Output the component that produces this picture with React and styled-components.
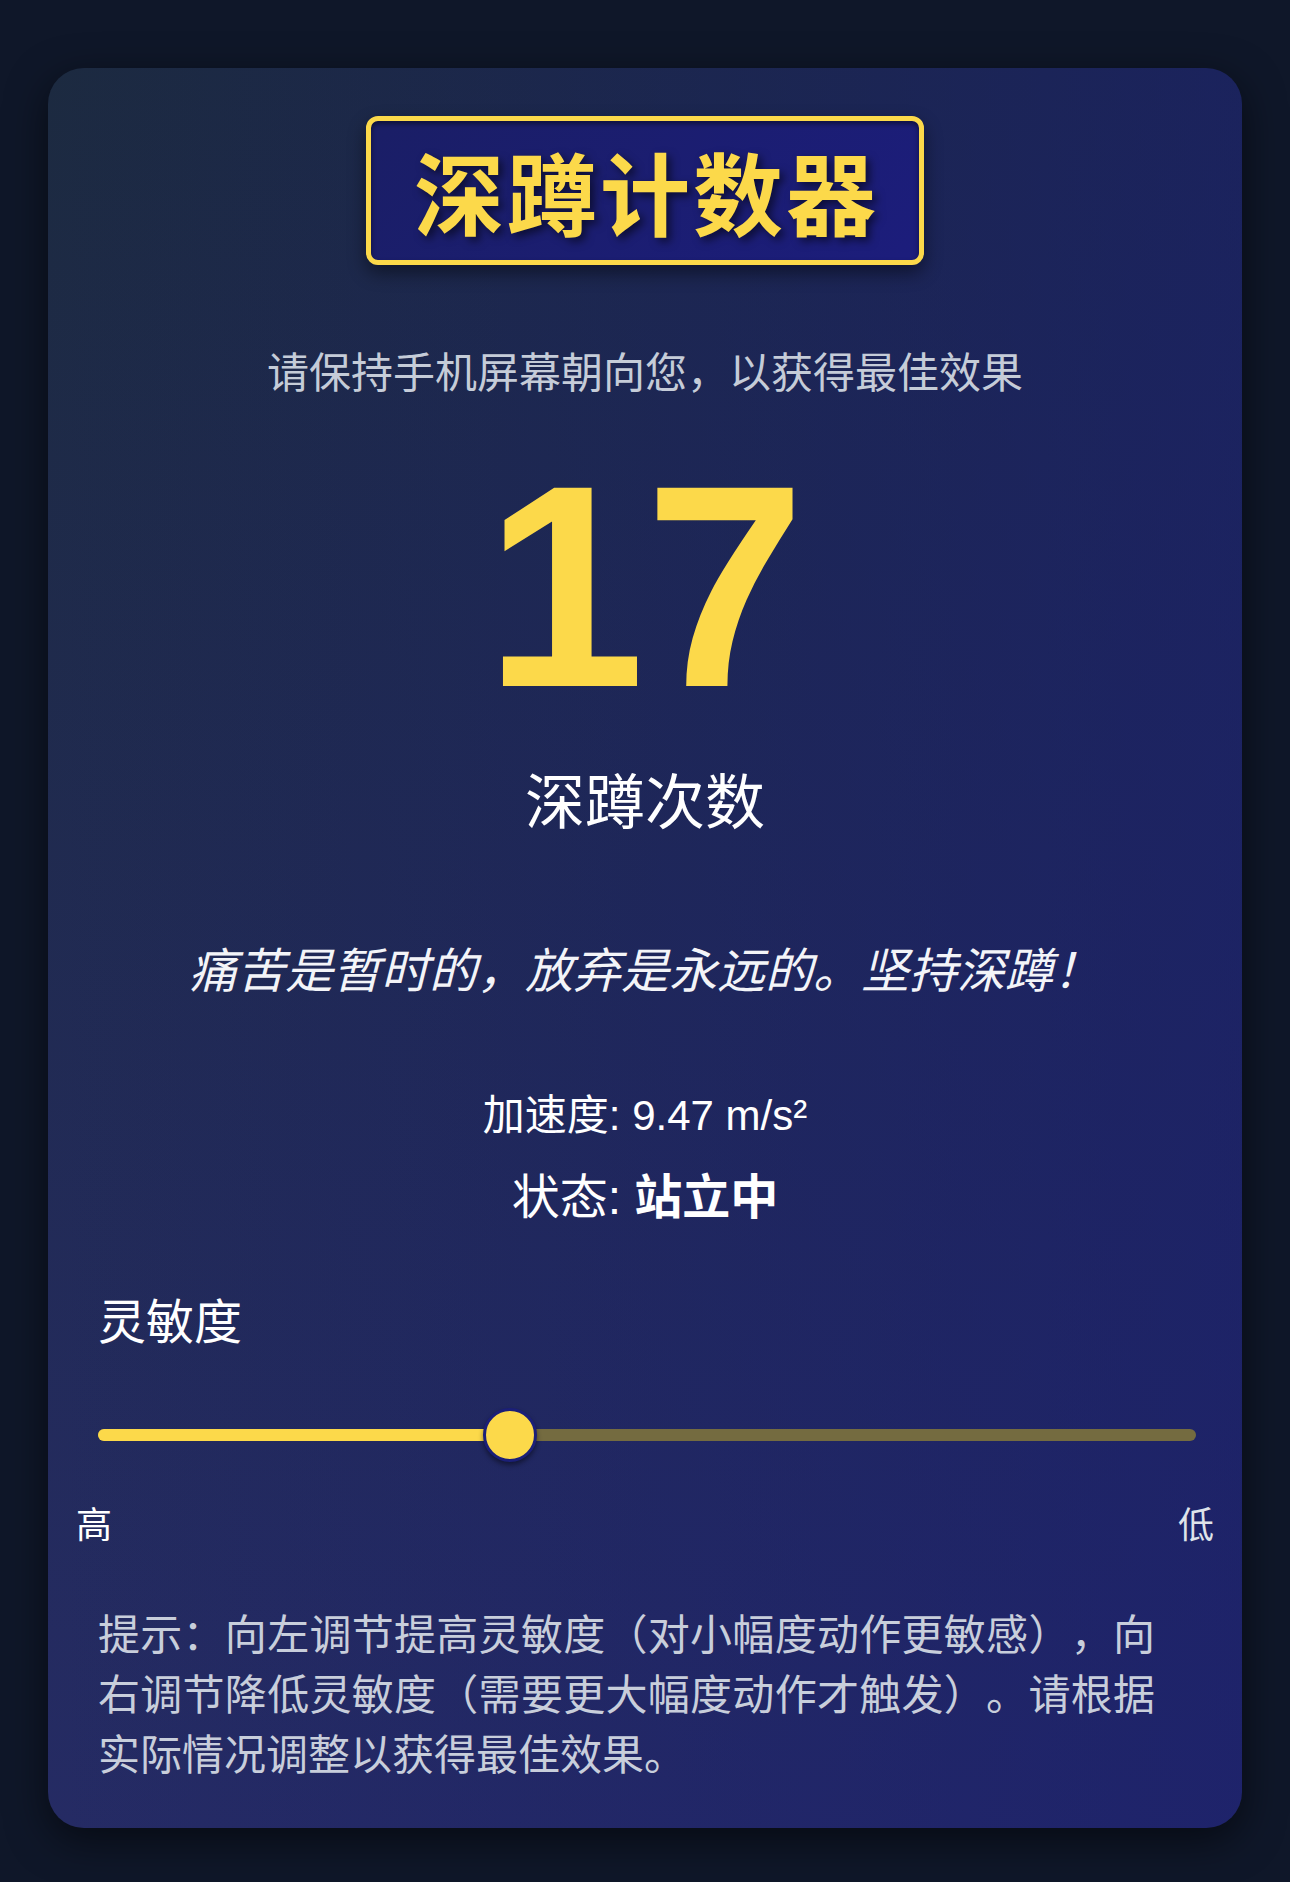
import React from "react";
import styled, { createGlobalStyle } from "styled-components";

const GlobalStyle = createGlobalStyle`
  html, body {
    margin: 0;
    padding: 0;
    background: #0f1729;
  }
  body {
    font-family: "Liberation Sans", "Noto Sans CJK SC", sans-serif;
    color: #ffffff;
  }
  * { box-sizing: border-box; }
`;

const Page = styled.div`
  min-height: 1882px;
  padding: 68px 48px 54px;
  background: #0f1729;
`;

const Card = styled.div`
  border-radius: 36px;
  padding: 48px 50px 46px;
  background:
    linear-gradient(to right, rgba(26, 30, 110, 0) 0%, rgba(26, 30, 112, 0.6) 100%),
    linear-gradient(to bottom, #1c2a40 0%, #252b64 100%);
  box-shadow: 0 12px 40px rgba(0, 0, 0, 0.55);
  display: flex;
  flex-direction: column;
  align-items: center;
`;

const TitleBox = styled.h1`
  margin: 0;
  height: 149px;
  padding: 0 40px 0 43px;
  border: 5px solid #fcd94a;
  border-radius: 12px;
  background: linear-gradient(135deg, #1a1e66 0%, #1c1d7c 100%);
  box-shadow: 0 8px 18px rgba(0, 0, 0, 0.45), inset 0 3px 5px rgba(0, 0, 0, 0.45);
  color: #fcd94a;
  font-family: "Noto Sans CJK SC", sans-serif;
  font-weight: 700;
  font-size: 90px;
  line-height: 139px;
  letter-spacing: 3px;
  text-shadow: 4px 4px 8px rgba(0, 0, 0, 0.55);
  white-space: nowrap;
`;

const Subtitle = styled.p`
  margin: 75px 0 0;
  font-family: "Noto Sans CJK SC", sans-serif;
  font-size: 42px;
  line-height: 60px;
  color: #c5ccd8;
`;

const Count = styled.div`
  margin-top: 42px;
  font-family: "Liberation Sans", Arial, sans-serif;
  font-weight: 700;
  font-size: 288px;
  line-height: 288px;
  height: 288px;
  color: #fcd94a;
`;

const CountLabel = styled.div`
  margin-top: 28px;
  font-family: "Noto Sans CJK SC", sans-serif;
  font-size: 60px;
  line-height: 80px;
  color: #ffffff;
`;

const Quote = styled.p`
  margin: 97px 0 0;
  font-family: "Noto Sans CJK SC", sans-serif;
  font-style: italic;
  font-size: 48px;
  line-height: 64px;
  color: #f3f4f8;
  white-space: nowrap;
`;

const InfoLine = styled.div`
  margin-top: ${(p) => p.$gap}px;
  font-size: ${(p) => p.$size}px;
  line-height: ${(p) => p.$lh}px;
  color: #ffffff;
  white-space: nowrap;
`;

const Strong = styled.span`
  font-weight: 700;
`;

const Section = styled.div`
  align-self: stretch;
  display: flex;
  flex-direction: column;
`;

const SectionTitle = styled.div`
  margin-top: 56px;
  font-family: "Noto Sans CJK SC", sans-serif;
  font-size: 48px;
  line-height: 64px;
  color: #ffffff;
`;

const SliderWrap = styled.div`
  margin-top: 55px;
  height: 60px;
  display: flex;
  align-items: center;
  margin-right: -4px;
`;

const Track = styled.div`
  position: relative;
  flex: 1;
  height: 12px;
  border-radius: 6px;
  background: #746b40;
`;

const Fill = styled.div`
  height: 100%;
  border-radius: 6px 0 0 6px;
  background: #fcd94a;
`;

const Thumb = styled.div`
  position: absolute;
  top: 50%;
  width: 54px;
  height: 54px;
  margin-top: -27px;
  border-radius: 50%;
  background: #fcd94a;
  border: 3px solid #1b1f78;
  box-shadow: 0 3px 5px rgba(0, 0, 0, 0.45);
`;

const RangeLabels = styled.div`
  margin: 33px -22px 0;
  display: flex;
  justify-content: space-between;
  font-family: "Noto Sans CJK SC", sans-serif;
  font-size: 36px;
  line-height: 48px;
`;

const RangeLabel = styled.span`
  color: ${(p) => (p.$muted ? "#dfe3ea" : "#ffffff")};
`;

const Hint = styled.div`
  margin-top: 56px;
  width: 1057px;
  font-family: "Noto Sans CJK SC", sans-serif;
  font-size: 42px;
  line-height: 60px;
  color: #c8cedb;
  text-spacing-trim: space-all;
`;

const HintLine = styled.span`
  display: block;
  white-space: nowrap;
  text-align: left;
  text-align-last: ${(p) => (p.$last ? "left" : "justify")};
`;

const hintLines = [
  "提示：向左调节提高灵敏度（对小幅度动作更敏感），向",
  "右调节降低灵敏度（需要更大幅度动作才触发）。请根据",
  "实际情况调整以获得最佳效果。",
];

export default function App() {
  const min = 1;
  const max = 5;
  const value = 2.5;
  const pct = ((value - min) / (max - min)) * 100;

  return (
    <>
      <GlobalStyle />
      <Page>
        <Card>
          <TitleBox>深蹲计数器</TitleBox>
          <Subtitle>请保持手机屏幕朝向您，以获得最佳效果</Subtitle>
          <Count>17</Count>
          <CountLabel>深蹲次数</CountLabel>
          <Quote>痛苦是暂时的，放弃是永远的。坚持深蹲！</Quote>
          <InfoLine $gap={87} $size={42} $lh={60}>
            加速度: 9.47 m/s²
          </InfoLine>
          <InfoLine $gap={20} $size={48} $lh={64}>
            状态: <Strong>站立中</Strong>
          </InfoLine>
          <Section>
            <SectionTitle>灵敏度</SectionTitle>
            <SliderWrap>
              <Track>
                <Fill style={{ width: `${pct}%` }} />
                <Thumb style={{ left: `calc(${pct}% - 27px)` }} />
              </Track>
            </SliderWrap>
            <RangeLabels>
              <RangeLabel>高</RangeLabel>
              <RangeLabel $muted>低</RangeLabel>
            </RangeLabels>
            <Hint>
              {hintLines.map((line, i) => (
                <HintLine key={i} $last={i === hintLines.length - 1}>
                  {line}
                </HintLine>
              ))}
            </Hint>
          </Section>
        </Card>
      </Page>
    </>
  );
}
